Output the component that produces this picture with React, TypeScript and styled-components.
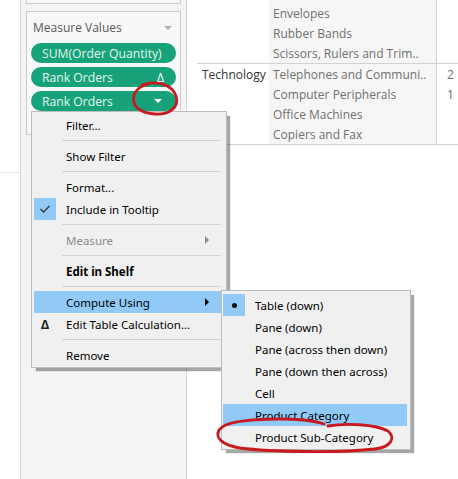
import React from 'react';
import styled, { createGlobalStyle } from 'styled-components';

const Global = createGlobalStyle`
  html, body { margin: 0; padding: 0; background: #ffffff; }
  body { width: 458px; height: 479px; overflow: hidden; }
  * { box-sizing: border-box; }
`;

const Page = styled.div`
  position: relative;
  width: 458px;
  height: 479px;
  overflow: hidden;
  display: flex;
  background: #ffffff;
  font-family: "Open Sans", "Noto Sans", sans-serif;
`;

const Gutter = styled.div`
  flex: none;
  width: 20px;
  display: flex;
  flex-direction: column;
`;

const GutterLine = styled.div`
  margin-top: 172px;
  height: 1px;
  background: #e4e4e4;
`;

const Sidebar = styled.div`
  flex: none;
  width: 167px;
  height: 479px;
  background: #f4f4f4;
  border-left: 1px solid #d6d6d6;
  border-right: 1px solid #d6d6d6;
  padding: 0 5px;
  display: flex;
  flex-direction: column;
  gap: 7px;
`;

const TopCard = styled.div`
  height: 4px;
  border: 1px solid #cacaca;
  border-top: none;
  background: #f8f8f8;
`;

const Card = styled.div`
  height: 124px;
  border: 1px solid #cacaca;
  background: #f7f7f7;
  display: flex;
  flex-direction: column;
  gap: 4px;
`;

const CardHeader = styled.div`
  height: 31px;
  padding: 0 6px;
  display: flex;
  align-items: center;
  justify-content: space-between;
  font-size: 12px;
  color: #5a5a5a;
  margin-bottom: -4px;
`;

const HeaderCaret = styled.span`
  width: 0;
  height: 0;
  border-left: 4px solid transparent;
  border-right: 4px solid transparent;
  border-top: 4px solid #b0b0b0;
  margin-right: 2px;
`;

const Pill = styled.div`
  height: 20px;
  margin: 0 4px;
  border-radius: 10px;
  background: #17a27a;
  color: #e4f6ef;
  font-size: 12.2px;
  padding: 0 12px 0 11px;
  display: flex;
  align-items: center;
  justify-content: space-between;
  white-space: nowrap;
`;

const PillDelta = styled.span`
  font-size: 12px;
  font-weight: 400;
  color: #ffffff;
`;

const PillCaret = styled.span`
  width: 0;
  height: 0;
  border-left: 4px solid transparent;
  border-right: 4px solid transparent;
  border-top: 4px solid #ffffff;
  margin-right: 2px;
`;

const TableArea = styled.div`
  flex: 1;
  padding-left: 10px;
  display: flex;
  flex-direction: column;
`;

const Group = styled.div`
  display: flex;
  border-bottom: 1px solid #d2d2d2;
`;

const CategoryCell = styled.div`
  width: 72px;
  flex: none;
  padding: 0 5px;
  height: 20px;
  display: flex;
  align-items: center;
  font-size: 12px;
  color: #333333;
  white-space: nowrap;
`;

const SubColumn = styled.div<{ $top?: number }>`
  width: 167px;
  flex: none;
  background: #f6f6f6;
  padding-top: ${p => p.$top ?? 0}px;
  display: flex;
  flex-direction: column;
`;

const ValueColumn = styled.div<{ $top?: number }>`
  flex: 1;
  border-left: 1px solid #d2d2d2;
  padding-top: ${p => p.$top ?? 0}px;
  display: flex;
  flex-direction: column;
`;

const Cell = styled.div<{ $pad?: number }>`
  height: 20px;
  padding-left: ${p => p.$pad ?? 4}px;
  display: flex;
  align-items: center;
  font-size: 12px;
  color: #707070;
  white-space: nowrap;
  overflow: hidden;
`;

const Menu = styled.div<{ $left: number; $top: number; $width: number; $pad: string }>`
  position: absolute;
  left: ${p => p.$left}px;
  top: ${p => p.$top}px;
  width: ${p => p.$width}px;
  padding: ${p => p.$pad};
  background: #f0f0f0;
  border: 1px solid #bdbdbd;
  box-shadow: 4px 4px 1px -1px rgba(0, 0, 0, 0.35);
  font-family: "Noto Sans", "Open Sans", sans-serif;
  font-size: 11.5px;
  color: #000000;
  display: flex;
  flex-direction: column;
`;

const Item = styled.div<{ $hl?: boolean; $disabled?: boolean; $bold?: boolean }>`
  height: 22px;
  display: grid;
  grid-template-columns: 22px 1fr 16px;
  column-gap: 10px;
  align-items: center;
  background: ${p => (p.$hl ? '#91c9f7' : 'transparent')};
  color: ${p => (p.$disabled ? '#8a8a8a' : '#000000')};
  font-weight: ${p => (p.$bold ? 700 : 400)};
  white-space: nowrap;
`;

const IconBox = styled.div<{ $hl?: boolean }>`
  width: 22px;
  height: 22px;
  display: flex;
  align-items: center;
  justify-content: center;
  background: ${p => (p.$hl ? '#91c9f7' : 'transparent')};
`;

const Arrow = styled.span<{ $disabled?: boolean }>`
  width: 0;
  height: 0;
  border-top: 4px solid transparent;
  border-bottom: 4px solid transparent;
  border-left: 4px solid ${p => (p.$disabled ? '#8a8a8a' : '#000000')};
`;

const Sep = styled.div`
  height: 9px;
  display: flex;
  align-items: center;
  padding-left: 28px;
`;

const SepLine = styled.div`
  flex: 1;
  height: 1px;
  background: #d2d2d2;
`;

const Delta = styled.span`
  font-size: 12px;
  font-weight: 700;
  color: #222222;
`;

const Bullet = styled.span`
  width: 5px;
  height: 5px;
  border-radius: 50%;
  background: #111111;
`;

const Ink = styled.svg`
  position: absolute;
  left: 0;
  top: 0;
  pointer-events: none;
`;

type MI = {
  label: string;
  hl?: boolean;
  disabled?: boolean;
  bold?: boolean;
  icon?: React.ReactNode;
  iconHl?: boolean;
  arrow?: boolean;
};

const MenuRow = ({ label, hl, disabled, bold, icon, iconHl, arrow }: MI) => (
  <Item $hl={hl} $disabled={disabled} $bold={bold}>
    <IconBox $hl={iconHl}>{icon}</IconBox>
    <span>{label}</span>
    {arrow ? <Arrow $disabled={disabled} /> : <span />}
  </Item>
);

const Separator = () => (
  <Sep>
    <SepLine />
  </Sep>
);

const Check = () => (
  <svg width="12" height="10" viewBox="0 0 12 10">
    <polyline points="1.5,5 4.5,8 10.5,2" fill="none" stroke="#333" strokeWidth="1.3" />
  </svg>
);

export default function App() {
  return (
    <>
      <Global />
      <Page>
        <Gutter>
          <GutterLine />
        </Gutter>
        <Sidebar>
          <TopCard />
          <Card>
            <CardHeader>
              <span>Measure Values</span>
              <HeaderCaret />
            </CardHeader>
            <Pill>SUM(Order Quantity)</Pill>
            <Pill>
              <span>Rank Orders</span>
              <PillDelta>Δ</PillDelta>
            </Pill>
            <Pill>
              <span>Rank Orders</span>
              <PillCaret />
            </Pill>
          </Card>
        </Sidebar>
        <TableArea>
          <Group>
            <CategoryCell />
            <SubColumn $top={3}>
              <Cell>Envelopes</Cell>
              <Cell>Rubber Bands</Cell>
              <Cell>Scissors, Rulers and Trim..</Cell>
            </SubColumn>
            <ValueColumn $top={3}>
              <Cell $pad={10} />
              <Cell $pad={10} />
              <Cell $pad={10} />
            </ValueColumn>
          </Group>
          <Group>
            <CategoryCell>Technology</CategoryCell>
            <SubColumn>
              <Cell>Telephones and Communi..</Cell>
              <Cell>Computer Peripherals</Cell>
              <Cell>Office Machines</Cell>
              <Cell>Copiers and Fax</Cell>
            </SubColumn>
            <ValueColumn>
              <Cell $pad={10}>2</Cell>
              <Cell $pad={10}>1</Cell>
              <Cell $pad={10} />
              <Cell $pad={10} />
            </ValueColumn>
          </Group>
        </TableArea>

        <Menu $left={31} $top={111} $width={196} $pad="2px 5px 1px 2px">
          <MenuRow label="Filter..." />
          <Separator />
          <MenuRow label="Show Filter" />
          <Separator />
          <MenuRow label="Format..." />
          <MenuRow label="Include in Tooltip" iconHl icon={<Check />} />
          <Separator />
          <MenuRow label="Measure" disabled arrow />
          <Separator />
          <MenuRow label="Edit in Shelf" bold />
          <Separator />
          <MenuRow label="Compute Using" hl arrow />
          <MenuRow label="Edit Table Calculation..." icon={<Delta>Δ</Delta>} />
          <Separator />
          <MenuRow label="Remove" />
        </Menu>

        <Menu $left={221} $top={290} $width={190} $pad="3px 3px 1px 1px">
          <MenuRow label="Table (down)" iconHl icon={<Bullet />} />
          <MenuRow label="Pane (down)" />
          <MenuRow label="Pane (across then down)" />
          <MenuRow label="Pane (down then across)" />
          <MenuRow label="Cell" />
          <MenuRow label="Product Category" hl />
          <MenuRow label="Product Sub-Category" />
        </Menu>

        <Ink width="458" height="479" viewBox="0 0 458 479">
          <path
            d="M 142 85 C 155 80, 172 84, 176 96 C 180 108, 168 115, 155 114 C 140 113, 131 106, 134 95 C 136 89, 143 85, 151 83"
            fill="none"
            stroke="#c8191e"
            strokeWidth="2.8"
            strokeLinecap="round"
          />
          <path
            d="M 328 426 C 345 423, 375 424, 388 431 C 396 438, 391 447, 375 449 C 340 453, 270 452, 240 448 C 222 445, 215 438, 219 430 C 224 422, 250 419, 280 419 C 300 419, 315 421, 324 424"
            fill="none"
            stroke="#c8191e"
            strokeWidth="2.8"
            strokeLinecap="round"
          />
        </Ink>
      </Page>
    </>
  );
}
